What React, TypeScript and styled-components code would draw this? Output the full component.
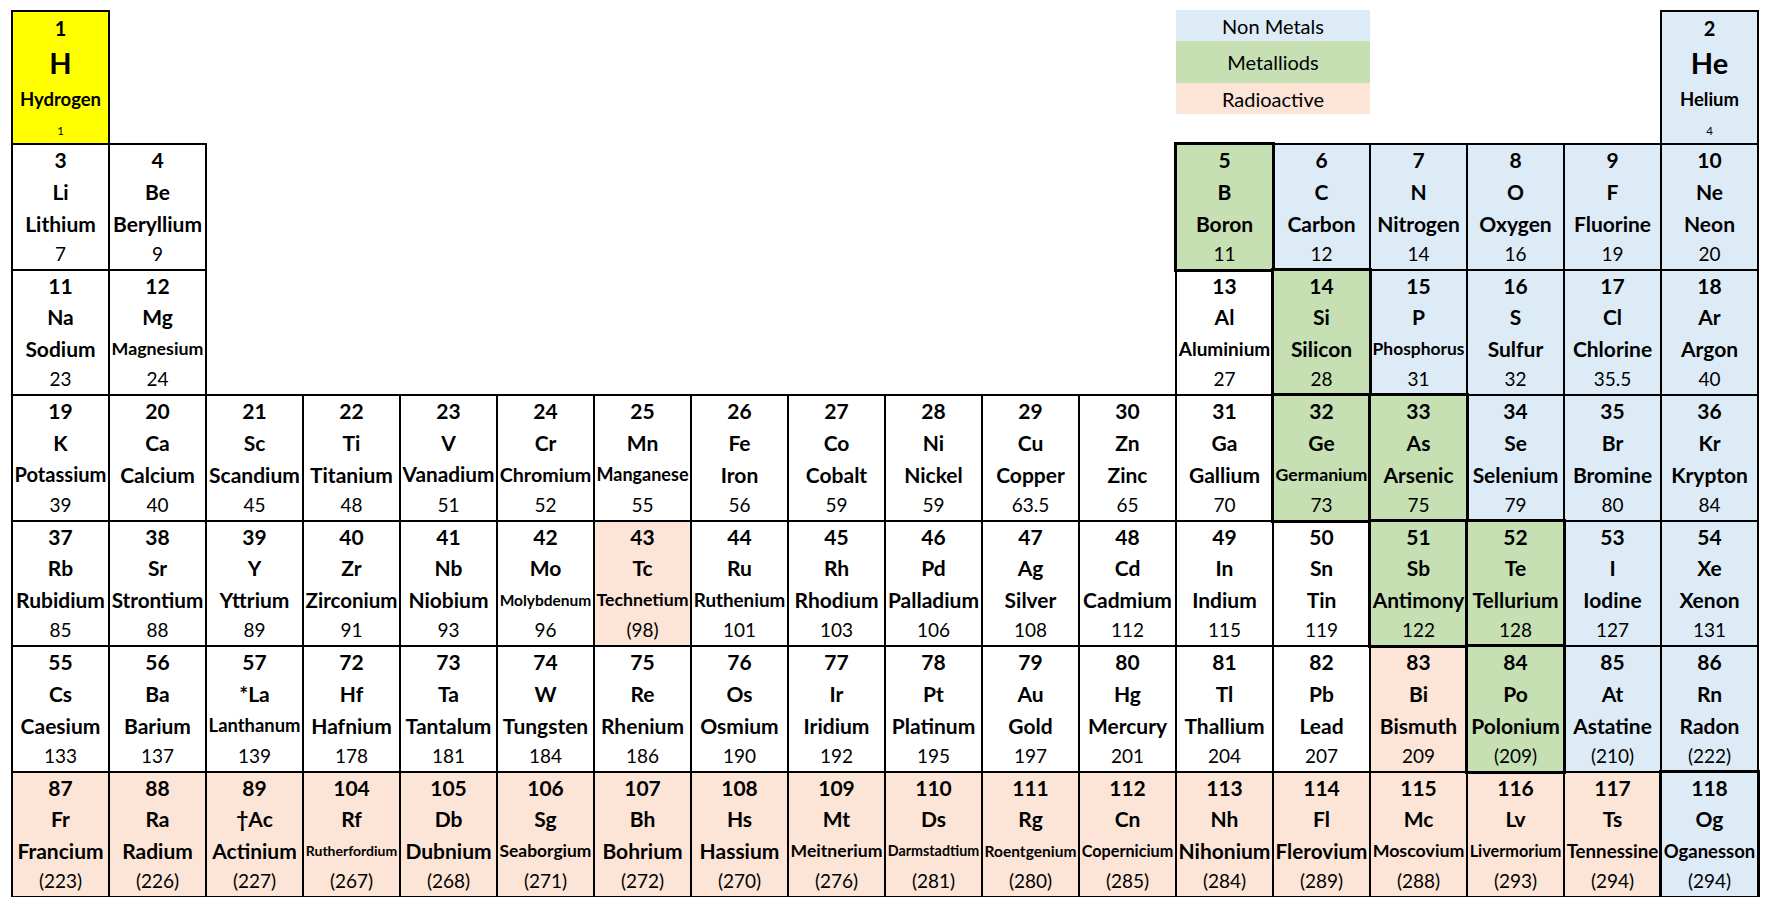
import React from "react";
import styled, { createGlobalStyle, css } from "styled-components";

type Kind = "plain" | "non" | "metalloid" | "radio" | "hydrogen";

interface Element {
  num: number;
  sym: string;
  name: string;
  mass: string;
  row: number;
  col: number;
  kind: Kind;
}

const colors: Record<Kind, string> = {
  plain: "#ffffff",
  non: "#ddebf7",
  metalloid: "#c6e0b4",
  radio: "#fce4d6",
  hydrogen: "#ffff00",
};

// [num, sym, name, mass, col, kind] per period
const raw: [number, string, string, string, number, Kind][][] = [
  [
    [1, "H", "Hydrogen", "1", 1, "hydrogen"],
    [2, "He", "Helium", "4", 18, "non"],
  ],
  [
    [3, "Li", "Lithium", "7", 1, "plain"],
    [4, "Be", "Beryllium", "9", 2, "plain"],
    [5, "B", "Boron", "11", 13, "metalloid"],
    [6, "C", "Carbon", "12", 14, "non"],
    [7, "N", "Nitrogen", "14", 15, "non"],
    [8, "O", "Oxygen", "16", 16, "non"],
    [9, "F", "Fluorine", "19", 17, "non"],
    [10, "Ne", "Neon", "20", 18, "non"],
  ],
  [
    [11, "Na", "Sodium", "23", 1, "plain"],
    [12, "Mg", "Magnesium", "24", 2, "plain"],
    [13, "Al", "Aluminium", "27", 13, "plain"],
    [14, "Si", "Silicon", "28", 14, "metalloid"],
    [15, "P", "Phosphorus", "31", 15, "non"],
    [16, "S", "Sulfur", "32", 16, "non"],
    [17, "Cl", "Chlorine", "35.5", 17, "non"],
    [18, "Ar", "Argon", "40", 18, "non"],
  ],
  [
    [19, "K", "Potassium", "39", 1, "plain"],
    [20, "Ca", "Calcium", "40", 2, "plain"],
    [21, "Sc", "Scandium", "45", 3, "plain"],
    [22, "Ti", "Titanium", "48", 4, "plain"],
    [23, "V", "Vanadium", "51", 5, "plain"],
    [24, "Cr", "Chromium", "52", 6, "plain"],
    [25, "Mn", "Manganese", "55", 7, "plain"],
    [26, "Fe", "Iron", "56", 8, "plain"],
    [27, "Co", "Cobalt", "59", 9, "plain"],
    [28, "Ni", "Nickel", "59", 10, "plain"],
    [29, "Cu", "Copper", "63.5", 11, "plain"],
    [30, "Zn", "Zinc", "65", 12, "plain"],
    [31, "Ga", "Gallium", "70", 13, "plain"],
    [32, "Ge", "Germanium", "73", 14, "metalloid"],
    [33, "As", "Arsenic", "75", 15, "metalloid"],
    [34, "Se", "Selenium", "79", 16, "non"],
    [35, "Br", "Bromine", "80", 17, "non"],
    [36, "Kr", "Krypton", "84", 18, "non"],
  ],
  [
    [37, "Rb", "Rubidium", "85", 1, "plain"],
    [38, "Sr", "Strontium", "88", 2, "plain"],
    [39, "Y", "Yttrium", "89", 3, "plain"],
    [40, "Zr", "Zirconium", "91", 4, "plain"],
    [41, "Nb", "Niobium", "93", 5, "plain"],
    [42, "Mo", "Molybdenum", "96", 6, "plain"],
    [43, "Tc", "Technetium", "(98)", 7, "radio"],
    [44, "Ru", "Ruthenium", "101", 8, "plain"],
    [45, "Rh", "Rhodium", "103", 9, "plain"],
    [46, "Pd", "Palladium", "106", 10, "plain"],
    [47, "Ag", "Silver", "108", 11, "plain"],
    [48, "Cd", "Cadmium", "112", 12, "plain"],
    [49, "In", "Indium", "115", 13, "plain"],
    [50, "Sn", "Tin", "119", 14, "plain"],
    [51, "Sb", "Antimony", "122", 15, "metalloid"],
    [52, "Te", "Tellurium", "128", 16, "metalloid"],
    [53, "I", "Iodine", "127", 17, "non"],
    [54, "Xe", "Xenon", "131", 18, "non"],
  ],
  [
    [55, "Cs", "Caesium", "133", 1, "plain"],
    [56, "Ba", "Barium", "137", 2, "plain"],
    [57, "*La", "Lanthanum", "139", 3, "plain"],
    [72, "Hf", "Hafnium", "178", 4, "plain"],
    [73, "Ta", "Tantalum", "181", 5, "plain"],
    [74, "W", "Tungsten", "184", 6, "plain"],
    [75, "Re", "Rhenium", "186", 7, "plain"],
    [76, "Os", "Osmium", "190", 8, "plain"],
    [77, "Ir", "Iridium", "192", 9, "plain"],
    [78, "Pt", "Platinum", "195", 10, "plain"],
    [79, "Au", "Gold", "197", 11, "plain"],
    [80, "Hg", "Mercury", "201", 12, "plain"],
    [81, "Tl", "Thallium", "204", 13, "plain"],
    [82, "Pb", "Lead", "207", 14, "plain"],
    [83, "Bi", "Bismuth", "209", 15, "radio"],
    [84, "Po", "Polonium", "(209)", 16, "metalloid"],
    [85, "At", "Astatine", "(210)", 17, "non"],
    [86, "Rn", "Radon", "(222)", 18, "non"],
  ],
  [
    [87, "Fr", "Francium", "(223)", 1, "radio"],
    [88, "Ra", "Radium", "(226)", 2, "radio"],
    [89, "†Ac", "Actinium", "(227)", 3, "radio"],
    [104, "Rf", "Rutherfordium", "(267)", 4, "radio"],
    [105, "Db", "Dubnium", "(268)", 5, "radio"],
    [106, "Sg", "Seaborgium", "(271)", 6, "radio"],
    [107, "Bh", "Bohrium", "(272)", 7, "radio"],
    [108, "Hs", "Hassium", "(270)", 8, "radio"],
    [109, "Mt", "Meitnerium", "(276)", 9, "radio"],
    [110, "Ds", "Darmstadtium", "(281)", 10, "radio"],
    [111, "Rg", "Roentgenium", "(280)", 11, "radio"],
    [112, "Cn", "Copernicium", "(285)", 12, "radio"],
    [113, "Nh", "Nihonium", "(284)", 13, "radio"],
    [114, "Fl", "Flerovium", "(289)", 14, "radio"],
    [115, "Mc", "Moscovium", "(288)", 15, "radio"],
    [116, "Lv", "Livermorium", "(293)", 16, "radio"],
    [117, "Ts", "Tennessine", "(294)", 17, "radio"],
    [118, "Og", "Oganesson", "(294)", 18, "non"],
  ],
];

const elements: Element[] = raw.flatMap((period, i) =>
  period.map(([num, sym, name, mass, col, kind]) => ({
    num,
    sym,
    name,
    mass,
    row: i + 1,
    col,
    kind,
  }))
);

const FONT = "Lato, 'Open Sans', sans-serif";
const BOLD_SIZE = 21;
const MASS_SIZE = 19;
const NAME_MAX_W = 92;

// shrink long names like Excel's "shrink to fit"
let measureCtx: CanvasRenderingContext2D | null = null;
const fitSize = (text: string, base: number) => {
  if (!measureCtx) {
    measureCtx = document.createElement("canvas").getContext("2d");
  }
  if (!measureCtx) return base;
  measureCtx.font = `700 ${base}px ${FONT}`;
  const w = measureCtx.measureText(text).width;
  return w > NAME_MAX_W ? Math.floor((base * NAME_MAX_W * 10) / w) / 10 : base;
};

const GlobalStyle = createGlobalStyle`
  html, body {
    margin: 0;
    background: #ffffff;
  }
  body {
    font-family: ${FONT};
    color: #000;
  }
`;

const Page = styled.div`
  padding: 11px 0 0 12px;
`;

const Table = styled.div`
  display: grid;
  grid-template-columns: repeat(18, 97px);
  grid-template-rows: 133px repeat(6, 125.5px);
`;

const Cell = styled.div<{ $row: number; $col: number; $kind: Kind; $thick?: boolean }>`
  grid-row: ${(p) => p.$row};
  grid-column: ${(p) => p.$col};
  background: ${(p) => colors[p.$kind]};
  outline: 2px solid #000;
  outline-offset: -1px;
  display: grid;
  grid-template-rows: 32px 31px 33px 28px;
  justify-items: center;
  align-items: center;
  text-align: center;
  white-space: nowrap;
  position: relative;
  ${(p) =>
    p.$thick &&
    css`
      outline-width: 3px;
      outline-offset: -1.5px;
      z-index: 1;
    `}
`;

const TopCell = styled(Cell)`
  grid-template-rows: 34px 37px 35px 27px;
`;

const Line = styled.div<{ $size?: number; $bold?: boolean }>`
  font-size: ${(p) => p.$size ?? BOLD_SIZE}px;
  font-weight: ${(p) => (p.$bold === false ? 400 : 700)};
  line-height: 1.2;
`;

const Legend = styled.div`
  grid-row: 1;
  grid-column: 13 / span 2;
  align-self: start;
  display: grid;
  grid-template-rows: 31px 42px 31px;
  margin-top: -1px;
`;

const LegendItem = styled.div<{ $kind: Kind }>`
  background: ${(p) => colors[p.$kind]};
  display: flex;
  align-items: center;
  justify-content: center;
  font-size: 20px;
  font-weight: 400;
`;

const ElementCell: React.FC<{ el: Element }> = ({ el }) => {
  const thick = el.kind === "metalloid" || el.num === 118;
  if (el.row === 1) {
    return (
      <TopCell $row={1} $col={el.col} $kind={el.kind}>
        <Line $size={20}>{el.num}</Line>
        <Line $size={29}>{el.sym}</Line>
        <Line $size={18.5}>{el.name}</Line>
        <Line $size={11.5} $bold={false}>
          {el.mass}
        </Line>
      </TopCell>
    );
  }
  return (
    <Cell $row={el.row} $col={el.col} $kind={el.kind} $thick={thick}>
      <Line>{el.num}</Line>
      <Line>{el.sym}</Line>
      <Line $size={fitSize(el.name, BOLD_SIZE)}>{el.name}</Line>
      <Line $size={MASS_SIZE} $bold={false}>
        {el.mass}
      </Line>
    </Cell>
  );
};

const App: React.FC = () => {
  return (
    <Page>
      <GlobalStyle />
      <Table>
        <Legend>
          <LegendItem $kind="non">Non Metals</LegendItem>
          <LegendItem $kind="metalloid">Metalliods</LegendItem>
          <LegendItem $kind="radio">Radioactive</LegendItem>
        </Legend>
        {elements.map((el) => (
          <ElementCell key={el.num} el={el} />
        ))}
      </Table>
    </Page>
  );
};

export default App;
